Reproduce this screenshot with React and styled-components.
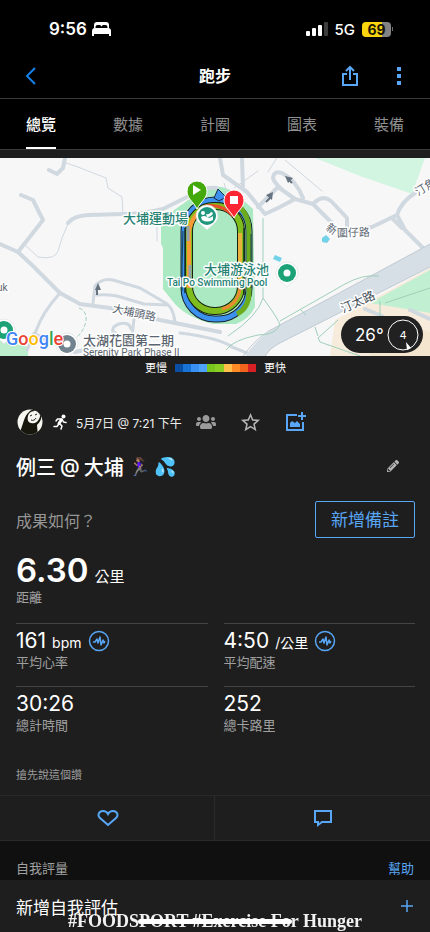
import React from 'react';
import styled, { createGlobalStyle } from 'styled-components';
import { FaPencilAlt, FaUsers } from 'react-icons/fa';
import { MdStarBorder } from 'react-icons/md';

const blue = '#58a6f5';

const GlobalStyle = createGlobalStyle`
  * {
    box-sizing: border-box;
  }

  html,
  body,
  #root {
    min-height: 100%;
  }

  body {
    margin: 0;
    background: #1e1e1e;
    color: #ffffff;
    font-family: Inter, "Noto Sans CJK TC", sans-serif;
  }

  button {
    padding: 0;
    border: 0;
    background: none;
    color: inherit;
    font: inherit;
    cursor: pointer;
  }

  h1,
  h2,
  p,
  dl,
  dd {
    margin: 0;
    font-weight: 400;
  }

  svg {
    display: block;
  }
`;

const Page = styled.div`
  height: 100vh;
  overflow: hidden;
`;

const Header = styled.header`
  background: #000000;
`;

const StatusBar = styled.div`
  display: flex;
  align-items: center;
  justify-content: space-between;
  height: 54px;
  padding: 4px 37px 0 49px;
`;

const StatusGroup = styled.div`
  display: flex;
  align-items: center;
  gap: ${({ $gap }) => $gap}px;
`;

const Clock = styled.span`
  font-size: 17px;
  font-weight: 600;
`;

const Network = styled.span`
  font-size: 15px;
  font-weight: 500;
`;

const Battery = styled.div`
  display: flex;
  align-items: center;
  gap: 1px;

  &::after {
    content: '';
    width: 1px;
    height: 4px;
    background: #6c6c6c;
  }
`;

const BatteryLevel = styled.span`
  width: 29px;
  height: 15px;
  border-radius: 4px;
  background: linear-gradient(90deg, #fbd60f 69%, #838383 69%);
  color: #1b1600;
  font-size: 14px;
  font-weight: 700;
  line-height: 15px;
  text-align: center;
`;

const NavBar = styled.div`
  display: grid;
  grid-template-columns: 1fr auto 1fr;
  align-items: center;
  height: 45px;
  padding: 0 24px;
  border-bottom: 1px solid #3b3b3b;
`;

const Heading = styled.h1`
  font-size: 16px;
  font-weight: 700;
  line-height: 20px;
`;

const NavActions = styled.div`
  display: flex;
  justify-content: flex-end;
  align-items: center;
  gap: 33px;
`;

const IconButton = styled.button`
  display: flex;
  align-items: center;
  justify-self: start;
  color: ${({ $color }) => $color || blue};
`;

const Tabs = styled.nav`
  display: flex;
  justify-content: space-between;
  height: 51px;
  padding: 0 26px;
  border-bottom: 1px solid #3b3b3b;
`;

const Tab = styled.button`
  && {
    border-bottom: 2px solid ${({ $active }) => ($active ? '#ffffff' : 'transparent')};
    color: ${({ $active }) => ($active ? '#ffffff' : '#8f8f8f')};
    font-size: 15px;
    font-weight: ${({ $active }) => ($active ? 500 : 400)};
  }
`;

const MapBox = styled.section`
  position: relative;
  margin-top: 8px;

  > svg {
    width: 100%;
    height: auto;
  }
`;

const Weather = styled.div`
  position: absolute;
  right: 7px;
  bottom: 3px;
  display: flex;
  align-items: center;
  justify-content: space-between;
  width: 82px;
  height: 37px;
  padding: 0 4px 0 14px;
  border-radius: 19px;
  background: #212121;
  font-size: 17px;
`;

const Legend = styled.div`
  display: flex;
  align-items: center;
  justify-content: center;
  gap: 8px;
  height: 24px;
  padding-left: 1px;
  font-size: 11px;
  line-height: 16px;
`;

const Scale = styled.div`
  display: flex;
  width: 81px;
  height: 8px;
`;

const Swatch = styled.span`
  flex: 1;
  background: ${({ $color }) => $color};
`;

const Summary = styled.section`
  padding: 28px 15px 12px 16px;
`;

const Meta = styled.div`
  display: flex;
  align-items: center;
  height: 28px;
`;

const Sport = styled.span`
  margin: 0 8px 0 8px;
`;

const When = styled.time`
  color: #eeeeee;
  font-size: 12px;
`;

const MetaActions = styled.div`
  display: flex;
  align-items: center;
  gap: 23px;
  margin-left: 14px;
`;

const TitleRow = styled.div`
  display: flex;
  align-items: center;
  justify-content: space-between;
  height: 30px;
  margin-top: 15px;
  padding-right: 16px;
`;

const Title = styled.h2`
  display: flex;
  align-items: center;
  gap: 4px;
  font-size: 20px;
  font-weight: 500;
`;

const Emoji = styled.span`
  font-size: 18px;
`;

const NoteRow = styled.div`
  display: flex;
  align-items: center;
  justify-content: space-between;
  margin-top: 20px;
  color: #959595;
  font-size: 16px;
`;

const NoteButton = styled.button`
  && {
    width: 100px;
    height: 37px;
    border: 1px solid ${blue};
    border-radius: 2px;
    color: ${blue};
    font-size: 17px;
    line-height: 32px;
  }
`;

const Distance = styled.dl`
  display: flex;
  flex-direction: column-reverse;
  margin-top: 12px;
`;

const Stats = styled.div`
  display: grid;
  grid-template-columns: 1fr 1fr;
  column-gap: 16px;
  margin-top: 18px;
`;

const Stat = styled.dl`
  display: flex;
  flex-direction: column-reverse;
  justify-content: flex-end;
  height: 63px;
  padding-top: 3px;
  border-top: 1px solid #444444;
`;

const Label = styled.dt`
  color: #a0a0a0;
  font-size: 13px;
  line-height: 15px;
`;

const Value = styled.dd`
  display: flex;
  align-items: baseline;
  gap: 6px;
  height: ${({ $large }) => ($large ? 40 : 28)}px;
  font-size: ${({ $large }) => ($large ? 33 : 21)}px;
  font-weight: ${({ $large }) => ($large ? 600 : 400)};
  line-height: ${({ $large }) => ($large ? 40 : 28)}px;
`;

const Unit = styled.span`
  font-size: ${({ $large }) => ($large ? 15 : 14)}px;
  font-weight: 400;
`;

const PulseButton = styled.button`
  align-self: center;
  color: ${blue};
`;

const Kudos = styled.p`
  margin-top: 18px;
  color: #9b9b9b;
  font-size: 11px;
  line-height: 16px;
`;

const Reactions = styled.div`
  display: grid;
  grid-template-columns: 1fr 1fr;
  height: 46px;
  border-top: 1px solid #292929;
  border-bottom: 1px solid #292929;
`;

const Reaction = styled.button`
  && {
    display: flex;
    align-items: center;
    justify-content: center;
    color: ${blue};
  }

  & + & {
    box-shadow: -1px 0 #2b2b2b;
  }
`;

const SectionHead = styled.div`
  display: flex;
  align-items: flex-end;
  justify-content: space-between;
  height: 39px;
  padding: 0 16px 3px;
  background: #101010;
  color: #a0a0a0;
  font-size: 13px;
  line-height: 18px;
`;

const HelpLink = styled.a`
  color: ${blue};
  text-decoration: none;
`;

const AddRow = styled.button`
  && {
    display: flex;
    align-items: center;
    justify-content: space-between;
    width: 100%;
    height: 52px;
    padding: 0 17px 0 16px;
    font-size: 17px;
  }
`;

const BottomOverlay = styled.div`
  position: fixed;
  right: 0;
  bottom: 0;
  left: 0;
  display: grid;
  place-items: center;
  pointer-events: none;
`;

const Caption = styled.p`
  grid-area: 1 / 1;
  color: #f2f2f2;
  font-family: "Liberation Serif", serif;
  font-size: 18px;
  font-weight: 700;
  line-height: 22px;
`;

const HomeIndicator = styled.span`
  grid-area: 1 / 1;
  width: 36%;
  height: 5px;
  border-radius: 3px;
  background: #ffffff;
`;

const BedIcon = () => (
  <svg width="19" height="14" viewBox="0 0 19 14" fill="currentColor">
    <path d="M2 6V3a3 3 0 0 1 3-3h9a3 3 0 0 1 3 3v3h-1.500V5a2 2 0 0 0-2-2h-2a2 2 0 0 0-2 1.500h0A2 2 0 0 0 7.500 3h-2a2 2 0 0 0-2 2v1z" />
    <path d="M3 6h13a3 3 0 0 1 3 3v5h-2v-2H2v2H0V9a3 3 0 0 1 3-3z" />
  </svg>
);

const SignalIcon = () => (
  <svg width="22" height="14" viewBox="0 0 22 14">
    <rect x="0" y="9" width="4" height="5" rx="1" fill="#fff" />
    <rect x="6" y="6" width="4" height="8" rx="1" fill="#fff" />
    <rect x="12" y="3" width="4" height="11" rx="1" fill="#fff" />
    <rect x="18" y="0" width="4" height="14" rx="1" fill="#3c3c3c" />
  </svg>
);

const BackIcon = () => (
  <svg width="14" height="20" viewBox="0 0 14 20" fill="none" stroke="#1680ea" strokeWidth="2">
    <path d="M11 2 3 10l8 8" />
  </svg>
);

const ShareIcon = () => (
  <svg width="18" height="22" viewBox="0 0 18 22" fill="none" stroke="currentColor" strokeWidth="2">
    <path d="M6 9H2v11h14V9h-4M9 15V2M5 6l4-4 4 4" />
  </svg>
);

const MoreIcon = () => (
  <svg width="14" height="20" viewBox="0 0 14 20" fill="currentColor">
    <path d="M5 1h4v4H5zM5 8h4v4H5zM5 15h4v4H5z" />
  </svg>
);

const Avatar = () => (
  <svg width="28" height="28" viewBox="0 0 28 28">
    <clipPath id="avatar">
      <circle cx="14" cy="14" r="12.500" />
    </clipPath>
    <g clipPath="url(#avatar)">
      <path d="M0 0h28v28H0z" fill="#f6f6f0" />
      <path d="M4 24C7 17 8 8 13 4c4-4 11-3 12 3 1 5-2 8-4 10l1 11H4z" fill="#17170d" />
      <path d="M12 8c1-4 4-5 8-5 4 1 5 5 3 8-2 4-5 5-8 4-3 0-4-4-3-7z" fill="#f6f6f0" />
      <path d="M14 8l2-1m3 0 2-1m-6 6c2 1 4 0 5-2" fill="none" stroke="#222" />
    </g>
  </svg>
);

const RunnerIcon = () => (
  <svg width="16" height="16" viewBox="0 0 16 16" fill="none" stroke="currentColor" strokeLinecap="round" strokeLinejoin="round">
    <circle cx="11.500" cy="2.500" r="2" fill="currentColor" stroke="none" />
    <path d="M9.500 5.500 7 9.500" strokeWidth="3" />
    <path d="M8.500 5H5.500L4 7M10.500 6l1 2 2.500.5" strokeWidth="1.500" />
    <path d="m8 10 2 2-1 3M6.500 10.500 5 12.500H2" strokeWidth="1.500" />
  </svg>
);

const AddImageIcon = () => (
  <svg width="22" height="22" viewBox="0 0 22 22" fill="none" stroke="currentColor" strokeWidth="2">
    <path d="M12 4H2v15h16V11M17 1v8M13 5h8" />
    <path d="M5 16v-4l2-2 3 2 2-2 3 3v3z" fill="currentColor" stroke="none" />
  </svg>
);

const PulseIcon = () => (
  <svg width="22" height="22" viewBox="0 0 22 22" fill="none" stroke="currentColor">
    <circle cx="11" cy="11" r="9.500" strokeWidth="1.500" />
    <path d="M5 12h2l2-3 1 4 2-6 1 8 2-5 1 3 1-2" strokeWidth="1.500" strokeLinejoin="round" />
  </svg>
);

const HeartIcon = () => (
  <svg width="22" height="18" viewBox="0 0 22 18" fill="none" stroke="currentColor" strokeWidth="2">
    <path d="M11 16 3 9C0 6 2 2 6 2c2 0 4 1 5 3 1-2 3-3 5-3 4 0 6 4 3 7z" />
  </svg>
);

const CommentIcon = () => (
  <svg width="20" height="18" viewBox="0 0 20 18" fill="none" stroke="currentColor" strokeWidth="2">
    <path d="M2 2h16v11H9l-4 3v-3H2z" />
  </svg>
);

const PlusIcon = () => (
  <svg width="12" height="12" viewBox="0 0 12 12" fill="none" stroke={blue} strokeWidth="1.500">
    <path d="M6 0v12M0 6h12" />
  </svg>
);

const Compass = () => (
  <svg width="32" height="32" viewBox="0 0 32 32">
    <circle cx="16" cy="16" r="15" fill="none" stroke="#fff" />
    <path d="m19 23 5 6-4 2z" fill="#fff" />
    <text x="16" y="20" fill="#fff" fontSize="11" textAnchor="middle">4</text>
  </svg>
);

const PlacePin = ({ x, y, color, r = 9, children }) => (
  <g transform={`translate(${x} ${y})`}>
    <path d="M-11 0a11 11 0 0 1 22 0c0 6-5 8-11 14C-6 8-11 6-11 0z" fill="#fff" stroke="#cfd5d8" strokeWidth=".5" />
    <circle r={r} fill={color} />
    {children || <circle r="3.500" fill="#fff" />}
  </g>
);

const RouteMap = () => (
  <svg viewBox="0 0 430 198" fontFamily='Roboto, "Noto Sans CJK TC", sans-serif'>
    <path d="M0 0h430v198H0z" fill="#f8f7f8" />
    <path d="M315 0h110l-13 36-52-18z" fill="#d2f5e1" />
    <path d="M0 182l28 7v9H0z" fill="#bdeecd" />
    <path d="M335 162l95-52v88H330z" fill="#f7ecdc" />
    <path d="M370 145l60-33v43l-36-6z" fill="#c0efd2" />
    <path d="M360 164h40l30 10v24h-60z" fill="#f4e5cf" />
    <path d="M161 60l9-5 28-20q18-12 36-1l19 17 2 98q-6 12-19 17h-23q-25-6-38-20l-12-15V90l-2-4z" fill="#abe9c2" />

    <g fill="none" stroke="#d0d8e0" strokeLinejoin="round" strokeLinecap="round" strokeWidth="4">
      <path d="M65 0l-2 10-6 6-8-4M21 37l12 5 10 20-25 32 14 13 28 28 20 11 30 4 50 12 60 12M0 86l18 8" />
      <path d="M68 65q5-7 20-8l35-1q20 0 40-5l28-14q14-9 26-7" />
      <path d="M60 135q-18 20-24 38l-9 19M93 145l2-17q7-8 18-6l27 8 24 14q9 4 11 20M97 137q8-1 20 1l27 8 24 1" strokeWidth="3" />
      <path d="M114 176q-4-7 5-10 10-3 12 5M134 161l-2 18" strokeWidth="3" />
      <path d="M220 0l3 17 24 17 18 22 13-6 17-9 18 5 19 19M242 0l1 31M258 49l20-20 17 12M303 40q-7-18-21-25-8-3-9 5 2 8 22 21" />
      <path d="M313 46q9-10 18-3l16 17v12M347 73l25-4 25-12q4-13 18-22M397 57l8 15 18 18M392 60l10 10" />
      <path d="M180 175q40 5 52 14l15 6" strokeWidth="3" />
      <path d="M75 194l20-4 20-15M34 176l13 6M365 151l17 7M410 152l20 9M396 190v-8" strokeWidth="4" />
      <path d="M66 5l12 4 28 11 2 10 14 9 1 17M25 87l13 12q17 3 20-6l4-13 6-14M227 35l-3-10M234 30l24-17M268 14l10-16M285 2l37 31M157 55v28" strokeWidth="1" />
    </g>

    <path d="M430 86L278 168q-18 9-33 30h20q5-8 13-12l152-77z" fill="#d6dee6" />
    <path d="M265 198q5-8 13-12l152-77M243 198q15-21 35-30l152-82" fill="none" stroke="#c1cbd2" />
    <g fill="none" stroke="#9fcfb9" strokeWidth="1">
      <path d="M263 60v80q16 22 17 27-5 10-22 10-25 5-32 15M228 178q30-20 35-38M280 163l65-37q18-10 34-8M300 151l6 6M338 162l-20 18 2 4 40 14M318 178l-3-9M380 143v15M385 145l45-15" />
      <path d="M79 150q8 3 7 13-2 10-10 17" strokeDasharray="4 2" />
    </g>
    <path d="M273 101l2-4 7 3-2 4zM322 80l4-3 4 4-3 4-5-1z" fill="#72d2e8" />
    <g fill="#67737f" stroke="#67737f">
      <path d="M266 44l5-5" strokeWidth="2" />
      <path d="m273 34-7 3 6 5zM285 18l8 2-5 5z" stroke="none" />
      <path d="M292 25l-3-3" strokeWidth="2" />
      <path d="M97 137v-6" strokeWidth="2" />
      <path d="m98 125-3 7h6z" stroke="none" />
    </g>

    <g fill="none">
      <rect x="184" y="42" width="65" height="119" rx="31" stroke="#14212a" strokeWidth="7" />
      <rect x="184" y="42" width="65" height="119" rx="31" stroke="#3d91ee" strokeWidth="5" />
      <path d="M232 44q17 8 17 30v60q0 16-12 22" stroke="#6dac1c" strokeWidth="5" />
      <path d="M251 76v54M183 73l-1 34v26" stroke="#153f4b" strokeWidth="1" />
      <rect x="189" y="48" width="52" height="105" rx="25" stroke="#162313" strokeWidth="8" />
      <rect x="189" y="48" width="52" height="105" rx="25" stroke="#7fbd1e" strokeWidth="6" />
      <path d="M189 130V74q3-20 21-26" stroke="#f69b36" strokeWidth="4" />
      <path d="M240 75v48" stroke="#e9b23c" strokeWidth="4" />
      <path d="M240 130q-2 17-18 21" stroke="#ed8932" strokeWidth="3" />
      <path d="M205 48q17-3 28 10" stroke="#e7502b" strokeWidth="3" />
      <path d="M188 68v15M190 107v17" stroke="#91a1af" strokeWidth="3" />
      <path d="M244 70v67M185 70v65" stroke="#17301f" strokeWidth="1.500" />
    </g>
    <path d="M214 40l4-9 8 8-7 4z" fill="#3d91ee" stroke="#172a45" />

    <g stroke="#ffffff" strokeWidth="3" paintOrder="stroke" strokeLinejoin="round">
      <g fill="#268273" fontWeight="500">
        <text x="123" y="65" fontSize="13">大埔運動場</text>
        <text x="204" y="116" fontSize="13">大埔游泳池</text>
        <text x="167" y="128" fontSize="10">Tai Po Swimming Pool</text>
      </g>
      <g fill="#5c6670">
        <text x="83" y="187" fontSize="13" fontWeight="500">太湖花園第二期</text>
        <text x="83" y="198" fontSize="10">Serenity Park Phase II</text>
        <text x="-3" y="133" fontSize="10">uk</text>
        <text fontSize="11" transform="translate(112 154) rotate(12)">大埔頭路</text>
        <text fontSize="11" transform="translate(325 71) rotate(35)">新</text>
        <text fontSize="11" transform="translate(337 79) rotate(-2)">圍仔路</text>
        <text fontSize="11" transform="translate(418 38) rotate(-32)">汀角路</text>
        <text fontSize="12" transform="translate(343 155) rotate(-24)" fill="#3e4a55">汀太路</text>
      </g>
    </g>

    <PlacePin x={207} y={58} color="#20967d">
      <path d="M-6 1q3-2 6 0t6-1v4q-6 3-11 0z" fill="#fff" />
      <circle cx="-4" cy="-3" r="2" fill="#fff" />
      <path d="M-1-2q3 1 5-2l2 1q-1 4-6 4z" fill="#fff" />
    </PlacePin>
    <PlacePin x={287} y={115} color="#1ca277" />
    <PlacePin x={4} y={172} color="#1ca277" />
    <PlacePin x={67} y={186} color="#71838e" />
    <path d="M197 51c-4-8-10-10-10-18a10 10 0 0 1 20 0c0 8-6 10-10 18z" fill="#43a90b" stroke="#fff" />
    <path d="M193 27v10l8-5z" fill="#fff" />
    <path d="M234 60c-4-8-10-10-10-18a10 10 0 0 1 20 0c0 8-6 10-10 18z" fill="#fb2632" stroke="#fff" />
    <path d="M230 38h8v8h-8z" fill="#fff" />

    <text
      x="6"
      y="187"
      fontFamily="Roboto, sans-serif"
      fontSize="18"
      fontWeight="500"
      stroke="#fff"
      strokeWidth="2"
      paintOrder="stroke"
    >
      <tspan fill="#4285f4">G</tspan>
      <tspan fill="#ea4335">o</tspan>
      <tspan fill="#fbbc05">o</tspan>
      <tspan fill="#4285f4">g</tspan>
      <tspan fill="#34a853">l</tspan>
      <tspan fill="#ea4335">e</tspan>
    </text>
  </svg>
);

const tabs = ['總覽', '數據', '計圈', '圖表', '裝備'];

const paceColors = [
  '#0b4fa5', '#1873d6', '#3790f2', '#4da2fb', '#77c51d',
  '#8bce23', '#ffc04b', '#fb8c25', '#f2641b', '#d71f26',
];

const stats = [
  { label: '平均心率', value: '161', unit: 'bpm', pulse: true },
  { label: '平均配速', value: '4:50', unit: '/公里', pulse: true },
  { label: '總計時間', value: '30:26' },
  { label: '總卡路里', value: '252' },
];

const App = () => {
  return (
    <Page>
      <GlobalStyle />
      <Header>
        <StatusBar>
          <StatusGroup $gap={5}>
            <Clock>9:56</Clock>
            <BedIcon />
          </StatusGroup>
          <StatusGroup $gap={7}>
            <SignalIcon />
            <Network>5G</Network>
            <Battery>
              <BatteryLevel>69</BatteryLevel>
            </Battery>
          </StatusGroup>
        </StatusBar>
        <NavBar>
          <IconButton aria-label="返回">
            <BackIcon />
          </IconButton>
          <Heading>跑步</Heading>
          <NavActions>
            <IconButton aria-label="分享">
              <ShareIcon />
            </IconButton>
            <IconButton aria-label="更多">
              <MoreIcon />
            </IconButton>
          </NavActions>
        </NavBar>
        <Tabs>
          {tabs.map((tab, i) => (
            <Tab key={tab} $active={i === 0}>
              {tab}
            </Tab>
          ))}
        </Tabs>
      </Header>

      <MapBox>
        <RouteMap />
        <Weather>
          <span>26°</span>
          <Compass />
        </Weather>
      </MapBox>
      <Legend>
        <span>更慢</span>
        <Scale>
          {paceColors.map((color) => (
            <Swatch key={color} $color={color} />
          ))}
        </Scale>
        <span>更快</span>
      </Legend>

      <Summary>
        <Meta>
          <Avatar />
          <Sport>
            <RunnerIcon />
          </Sport>
          <When>5月7日 @ 7:21 下午</When>
          <MetaActions>
            <FaUsers size={20} color="#9a9a9a" />
            <IconButton $color="#b5b5b5" aria-label="收藏">
              <MdStarBorder size={23} />
            </IconButton>
            <IconButton aria-label="新增相片">
              <AddImageIcon />
            </IconButton>
          </MetaActions>
        </Meta>

        <TitleRow>
          <Title>
            <span>例三</span>
            <span>@</span>
            <span>大埔</span>
            <Emoji>🏃🏽‍♀️</Emoji>
            <Emoji>💦</Emoji>
          </Title>
          <IconButton $color="#b5b5b5" aria-label="編輯">
            <FaPencilAlt size={12} />
          </IconButton>
        </TitleRow>

        <NoteRow>
          <span>成果如何？</span>
          <NoteButton>新增備註</NoteButton>
        </NoteRow>

        <Distance>
          <Label>距離</Label>
          <Value $large>
            6.30
            <Unit $large>公里</Unit>
          </Value>
        </Distance>

        <Stats>
          {stats.map(({ label, value, unit, pulse }) => (
            <Stat key={label}>
              <Label>{label}</Label>
              <Value>
                {value}
                {unit && <Unit>{unit}</Unit>}
                {pulse && (
                  <PulseButton aria-label={`${label}圖表`}>
                    <PulseIcon />
                  </PulseButton>
                )}
              </Value>
            </Stat>
          ))}
        </Stats>

        <Kudos>搶先說這個讚</Kudos>
      </Summary>

      <Reactions>
        <Reaction aria-label="讚">
          <HeartIcon />
        </Reaction>
        <Reaction aria-label="留言">
          <CommentIcon />
        </Reaction>
      </Reactions>

      <SectionHead>
        <span>自我評量</span>
        <HelpLink href="#help">幫助</HelpLink>
      </SectionHead>
      <AddRow>
        新增自我評估
        <PlusIcon />
      </AddRow>

      <BottomOverlay>
        <Caption>#FOODSPORT #Exercise For Hunger</Caption>
        <HomeIndicator />
      </BottomOverlay>
    </Page>
  );
};

export default App;
